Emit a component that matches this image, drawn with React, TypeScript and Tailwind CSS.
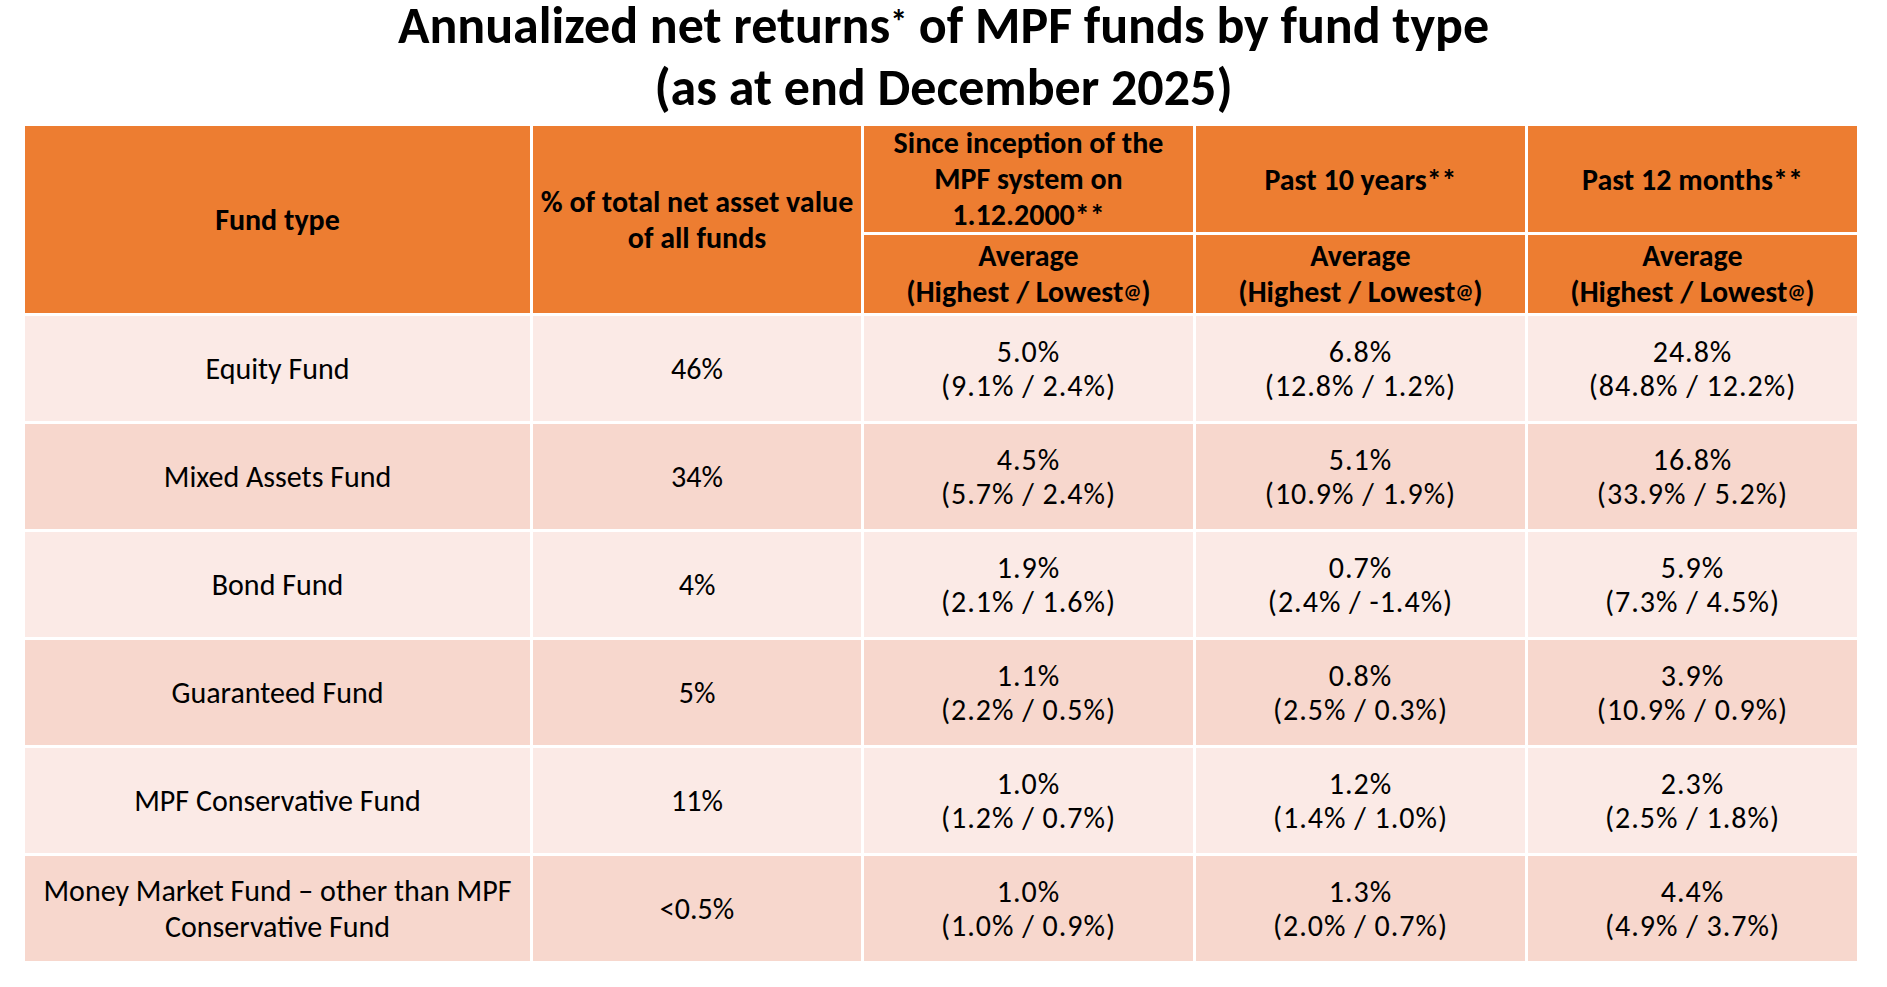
const FONT = "font-['Carlito','Liberation_Sans',sans-serif]"

type Row = {
  name: string[]
  share: string
  cols: [string, string][]
}

const ROWS: Row[] = [
  { name: ['Equity Fund'], share: '46%', cols: [['5.0%', '(9.1% / 2.4%)'], ['6.8%', '(12.8% / 1.2%)'], ['24.8%', '(84.8% / 12.2%)']] },
  { name: ['Mixed Assets Fund'], share: '34%', cols: [['4.5%', '(5.7% / 2.4%)'], ['5.1%', '(10.9% / 1.9%)'], ['16.8%', '(33.9% / 5.2%)']] },
  { name: ['Bond Fund'], share: '4%', cols: [['1.9%', '(2.1% / 1.6%)'], ['0.7%', '(2.4% / -1.4%)'], ['5.9%', '(7.3% / 4.5%)']] },
  { name: ['Guaranteed Fund'], share: '5%', cols: [['1.1%', '(2.2% / 0.5%)'], ['0.8%', '(2.5% / 0.3%)'], ['3.9%', '(10.9% / 0.9%)']] },
  { name: ['MPF Conservative Fund'], share: '11%', cols: [['1.0%', '(1.2% / 0.7%)'], ['1.2%', '(1.4% / 1.0%)'], ['2.3%', '(2.5% / 1.8%)']] },
  { name: ['Money Market Fund – other than MPF', 'Conservative Fund'], share: '<0.5%', cols: [['1.0%', '(1.0% / 0.9%)'], ['1.3%', '(2.0% / 0.7%)'], ['4.4%', '(4.9% / 3.7%)']] },
]

function AvgHeader() {
  return (
    <div className="bg-[#ed7d31] flex flex-col items-center justify-center font-bold leading-[36px]">
      <span>Average</span>
      <span>
        (Highest / Lowest<sup className="text-[20px] relative -top-[4px]">@</sup>)
      </span>
    </div>
  )
}

export default function App() {
  return (
    <div className={`w-[1887px] h-[987px] bg-white text-black ${FONT}`}>
      {/* Title */}
      <div className="flex flex-col items-center gap-[12px] font-bold text-[52px] leading-[50px]">
        <div>
          Annualized net returns<sup className="text-[34px] relative -top-[10px]">*</sup> of MPF funds by fund type
        </div>
        <div>(as at end December 2025)</div>
      </div>

      {/* Table */}
      <div className="absolute left-[25px] top-[126px] w-[1832px] grid grid-cols-[505px_328px_329px_329px_329px] grid-rows-[106px_78px] gap-[3px] bg-white text-[30px]">
        <div className="row-span-2 bg-[#ed7d31] flex items-center justify-center font-bold">Fund type</div>
        <div className="row-span-2 bg-[#ed7d31] flex flex-col items-center justify-center font-bold leading-[36px] text-center">
          <span>% of total net asset value</span>
          <span>of all funds</span>
        </div>
        <div className="bg-[#ed7d31] flex flex-col items-center justify-center font-bold leading-[36px] text-center">
          <span>Since inception of the</span>
          <span>MPF system on</span>
          <span>1.12.2000**</span>
        </div>
        <div className="bg-[#ed7d31] flex items-center justify-center font-bold">Past 10 years**</div>
        <div className="bg-[#ed7d31] flex items-center justify-center font-bold">Past 12 months**</div>
        <AvgHeader />
        <AvgHeader />
        <AvgHeader />

        {ROWS.map((row, i) => {
          const bg = i % 2 === 0 ? 'bg-[#fbeae6]' : 'bg-[#f7d7cd]'
          return (
            <div key={i} className="contents">
              <div className={`${bg} h-[105px] flex flex-col items-center justify-center leading-[36px] text-center`}>
                {row.name.map((n) => (
                  <span key={n}>{n}</span>
                ))}
              </div>
              <div className={`${bg} h-[105px] flex items-center justify-center`}>{row.share}</div>
              {row.cols.map(([avg, range], j) => (
                <div
                  key={j}
                  className={`${bg} h-[105px] flex flex-col items-center justify-center leading-[34px] tracking-[1px]`}
                >
                  <span>{avg}</span>
                  <span>{range}</span>
                </div>
              ))}
            </div>
          )
        })}
      </div>
    </div>
  )
}
